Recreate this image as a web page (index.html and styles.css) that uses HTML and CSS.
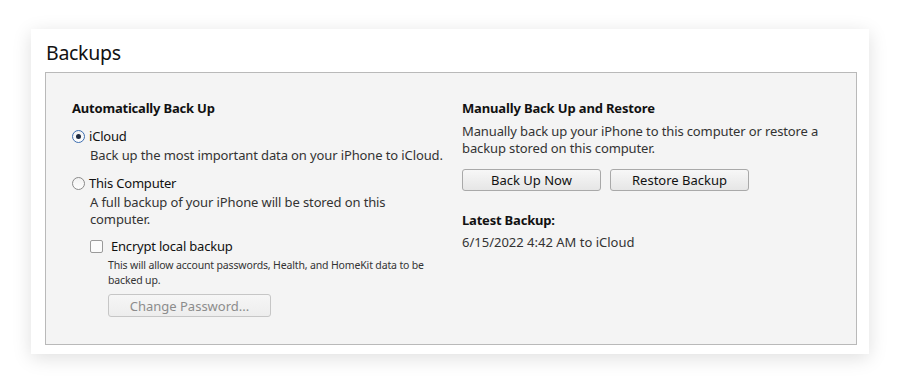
FILE: index.html
```html
<!DOCTYPE html>
<html lang="en">
<head>
    <meta charset="UTF-8">
    <meta name="viewport" content="width=device-width, initial-scale=1.0">
    <title>Backups</title>
    <link rel="stylesheet" href="styles.css">
</head>
<body>
    <div class="card">
        <h1>Backups</h1>
        <div class="panel">
            <div class="column left">
                <h2>Automatically Back Up</h2>
                <div class="option">
                    <span class="radio checked"></span>
                    <span class="option-label">iCloud</span>
                </div>
                <p class="desc">Back up the most important data on your iPhone to iCloud.</p>
                <div class="option">
                    <span class="radio"></span>
                    <span class="option-label">This Computer</span>
                </div>
                <p class="desc narrow">A full backup of your iPhone will be stored on this computer.</p>
                <div class="check-row">
                    <span class="checkbox"></span>
                    <span class="check-label">Encrypt local backup</span>
                </div>
                <p class="note">This will allow account passwords, Health, and HomeKit data to be backed up.</p>
                <button class="btn disabled">Change Password...</button>
            </div>
            <div class="column right">
                <h2 class="wide">Manually Back Up and Restore</h2>
                <p class="desc right-desc">Manually back up your iPhone to this computer or restore a backup stored on this computer.</p>
                <div class="buttons">
                    <button class="btn">Back Up Now</button>
                    <button class="btn">Restore Backup</button>
                </div>
                <h2 class="latest">Latest Backup:</h2>
                <p class="desc date">6/15/2022 4:42 AM to iCloud</p>
            </div>
        </div>
    </div>
</body>
</html>
```

FILE: styles.css
```css
body {
    font-family: "Noto Sans", "Open Sans", sans-serif;
    background-color: #fff;
    margin: 0;
    padding: 29px 31px 30px 31px;
    color: #1a1a1a;
}

.card {
    background-color: #fff;
    padding: 10px 12px 9px 14px;
    box-shadow: 0 4px 18px rgba(0, 0, 0, 0.13);
}

h1 {
    font-size: 19.5px;
    font-weight: normal;
    letter-spacing: -0.3px;
    margin: 0 0 0 1px;
    line-height: 28px;
    height: 33px;
    color: #111;
}

.panel {
    background-color: #f4f4f4;
    border: 1px solid #b9b9b9;
    display: flex;
    height: 273px;
    box-sizing: border-box;
    padding: 26px 0 0 26px;
}

.column.left {
    width: 390px;
}

.column.right {
    flex: 1;
}

h2 {
    font-size: 13px;
    font-weight: bold;
    letter-spacing: -0.2px;
    margin: 0;
    line-height: 18px;
    color: #111;
}

h2.wide {
    letter-spacing: -0.15px;
}

.option {
    display: flex;
    align-items: center;
    margin-top: 10px;
    height: 18px;
}

.radio {
    width: 11px;
    height: 11px;
    border: 1px solid #8a8a8a;
    border-radius: 50%;
    background: linear-gradient(#f2f2f2, #fdfdfd);
    margin-right: 4px;
    position: relative;
}

.radio.checked {
    border-color: #3c6db0;
}

.radio.checked::after {
    content: "";
    position: absolute;
    left: 3px;
    top: 3px;
    width: 5px;
    height: 5px;
    border-radius: 50%;
    background-color: #1d2a40;
}

.option-label {
    font-size: 13px;
    letter-spacing: -0.2px;
    color: #111;
}

.desc {
    font-size: 13px;
    letter-spacing: -0.12px;
    margin: 2px 0 0 18px;
    line-height: 17px;
    color: #333;
}

.desc.narrow {
    width: 320px;
}

.check-row {
    display: flex;
    align-items: center;
    margin: 9px 0 0 18px;
    height: 18px;
}

.checkbox {
    width: 11px;
    height: 11px;
    border: 1px solid #9a9a9a;
    border-radius: 2px;
    background-color: #fbfbfb;
    margin-right: 8px;
}

.check-label {
    font-size: 13px;
    letter-spacing: -0.2px;
    color: #111;
}

.note {
    font-size: 10.5px;
    letter-spacing: -0.15px;
    margin: 3px 0 0 36px;
    line-height: 15px;
    width: 340px;
    color: #333;
}

.btn {
    font-family: inherit;
    font-size: 13px;
    color: #111;
    background: linear-gradient(#f7f7f7, #e6e6e6);
    border: 1px solid #a9a9a9;
    border-radius: 3px;
    height: 22px;
    padding: 0;
    width: 139px;
    cursor: pointer;
}

.btn.disabled {
    margin: 6px 0 0 36px;
    width: 163px;
    height: 23px;
    color: #8c8c8c;
    border-color: #c6c6c6;
    background: linear-gradient(#f6f6f6, #ededed);
}

.right-desc {
    margin: 6px 0 0 0;
    width: 370px;
}

.buttons {
    display: flex;
    gap: 9px;
    margin-top: 12px;
}

.latest {
    margin-top: 20px;
}

.desc.date {
    margin: 5px 0 0 0;
    letter-spacing: 0;
}
```
